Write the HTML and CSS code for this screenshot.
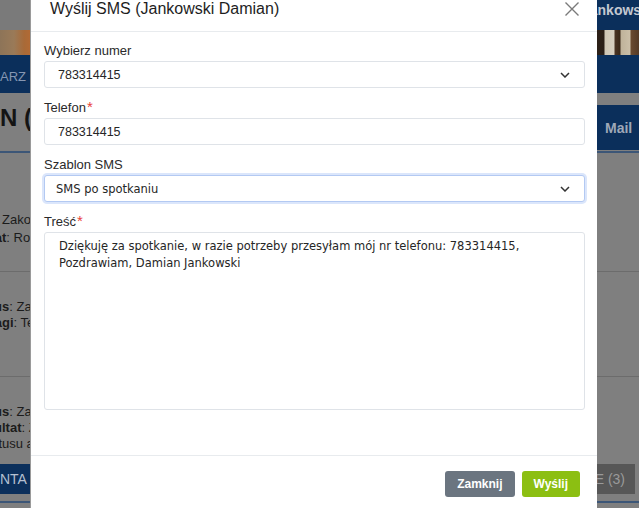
FILE: index.html
```html
<!DOCTYPE html>
<html lang="pl">
<head>
<meta charset="utf-8">
<title>Wyślij SMS</title>
<link rel="stylesheet" href="styles.css">
</head>
<body>
<div class="page">
  <header class="topbar">
    <div class="user">Jankowski Damian</div>
  </header>
  <div class="banner"></div>
  <nav class="nav"><span class="navitem"><span class="lead">KALEND</span>ARZ</span></nav>
  <div class="titlerow">
    <h1 class="ptitle"><span class="lead">KLIENT: JANKOWSKI DAMIA</span>N (</h1>
    <div class="actions"><span class="abtn">Mail</span></div>
  </div>
  <div class="entries">
    <div class="entry e1">
      <div class="ln"><span class="lead"><b>Status</b>:&nbsp;</span>Zakończone</div>
      <div class="ln"><span class="lead"><b>Rezulta</b></span><b>t</b>: Rozmowa</div>
    </div>
    <div class="entry e2">
      <div class="ln"><span class="lead"><b>Statu</b></span><b>s</b>: Zakończone</div>
      <div class="ln"><span class="lead"><b>Uwa</b></span><b>gi</b>: Telefon</div>
    </div>
    <div class="entry e3">
      <div class="ln"><span class="lead"><b>Statu</b></span><b>s</b>: Zakończone</div>
      <div class="ln"><span class="lead"><b>Rezu</b></span><b>ltat</b>: Zaplanowano</div>
      <div class="ln"><span class="lead">Zmiana stat</span>usu albo</div>
    </div>
  </div>
  <div class="bottombar">
    <span class="bbtn navy"><span class="lead">DODAJ KLIE</span>NTA</span>
    <span class="bbtn dark">ZADANIE (3)</span>
  </div>
</div>

<div class="modal" role="dialog" aria-labelledby="mtitle">
  <div class="mhead">
    <h2 class="mtitle" id="mtitle">Wyślij SMS (Jankowski Damian)</h2>
    <button class="close" type="button" aria-label="Zamknij">
      <svg width="16" height="16" viewBox="0 0 16 16"><path d="M1.5 1.5 L14.5 14.5 M14.5 1.5 L1.5 14.5" stroke="#7a7a7a" stroke-width="1.4" fill="none"/></svg>
    </button>
  </div>
  <div class="mbody">
    <div class="group">
      <label class="lbl">Wybierz numer</label>
      <div class="selwrap">
        <select class="ctrl sel"><option>783314415</option></select>
        <svg class="chev" width="10" height="6" viewBox="0 0 10 6"><path d="M1 1 L5 5 L9 1" stroke="#333" stroke-width="1.5" fill="none"/></svg>
      </div>
    </div>
    <div class="group">
      <label class="lbl">Telefon<span class="req">*</span></label>
      <input class="ctrl inp" type="text" value="783314415">
    </div>
    <div class="group">
      <label class="lbl">Szablon SMS</label>
      <div class="selwrap">
        <select class="ctrl sel focus tpl"><option>SMS po spotkaniu</option></select>
        <svg class="chev" width="10" height="6" viewBox="0 0 10 6"><path d="M1 1 L5 5 L9 1" stroke="#333" stroke-width="1.5" fill="none"/></svg>
      </div>
    </div>
    <div class="group last">
      <label class="lbl">Treść<span class="req">*</span></label>
      <textarea class="ctrl ta">Dziękuję za spotkanie, w razie potrzeby przesyłam mój nr telefonu: 783314415, Pozdrawiam, Damian Jankowski</textarea>
    </div>
  </div>
  <div class="mfoot">
    <button class="btn gray" type="button">Zamknij</button>
    <button class="btn green" type="button">Wyślij</button>
  </div>
</div>
</body>
</html>
```

FILE: styles.css
```css
html, body {
  margin: 0;
  padding: 0;
  width: 639px;
  height: 508px;
  overflow: hidden;
  background: #7f7f7f;
  font-family: "Liberation Sans", Arial, sans-serif;
}

.page {
  position: relative;
  width: 639px;
  height: 508px;
  background: #7f7f7f;
  color: #1b1b1b;
  font-size: 13px;
}

.lead {
  display: inline-flex;
  justify-content: flex-end;
  width: 0;
  white-space: nowrap;
}

/* top bar */
.topbar {
  height: 30px;
  display: flex;
  justify-content: flex-end;
  background: #7a7a7a;
}
.user {
  width: 136px;
  padding-left: 79px;
  box-sizing: border-box;
  background: #0b2f5b;
  color: #c3c8d1;
  font-weight: bold;
  font-size: 14px;
  line-height: 21px;
  white-space: nowrap;
  overflow: hidden;
}

.banner {
  height: 25px;
  background: linear-gradient(90deg,
    #8d7458 0, #9a7a58 14px, #a86a38 24px, #b26a34 30px, #6a5038 60px,
    #3e2c1e 560px, #2c2018 598px, #2a1e16 604px,
    #cfc6b4 605px, #d8d0c0 614px, #4a3424 615px, #3a2818 620px,
    #bfb29a 621px, #cbbfa8 630px, #6a4a30 631px, #553a26 639px);
}

.nav {
  height: 38px;
  background: #0b2f5b;
  display: flex;
  align-items: center;
}
.navitem {
  color: #8697b2;
  font-size: 13px;
  white-space: nowrap;
  padding-top: 4px;
}

.titlerow {
  height: 58px;
  border-bottom: 2px solid #3c5677;
  display: flex;
  justify-content: space-between;
  align-items: flex-start;
}
.ptitle {
  margin: 0;
  padding-top: 10px;
  font-size: 24px;
  line-height: 30px;
  font-weight: bold;
  color: #141414;
  white-space: nowrap;
}
.actions {
  margin-top: 12px;
  display: flex;
}
.abtn {
  display: flex;
  align-items: center;
  height: 45px;
  width: 60px;
  padding-left: 8px;
  box-sizing: border-box;
  background: #0b2f5b;
  color: #9ea8b8;
  font-weight: bold;
  font-size: 14px;
  margin-right: -18px;
}

.entries {
  display: flex;
  flex-direction: column;
}
.entry {
  border-bottom: 1px solid #6c6c6c;
  padding-left: 2px;
}
.ln {
  white-space: nowrap;
}
.e1 { padding-top: 58px; padding-bottom: 24px; }
.e1 .ln { line-height: 18px; }
.e2 { padding-top: 27px; padding-bottom: 45px; }
.e2 .ln { line-height: 16px; }
.e3 { padding-top: 27px; padding-bottom: 12px; border-bottom: none; }
.e3 .ln { line-height: 16px; }

.bottombar {
  display: flex;
  justify-content: space-between;
  padding-bottom: 7px;
  border-bottom: 2px solid #3c5677;
}
.bbtn {
  display: flex;
  align-items: center;
  height: 30px;
  font-size: 14px;
  white-space: nowrap;
  box-sizing: border-box;
}
.bbtn.navy {
  background: #0b2f5b;
  color: #b5c0d0;
  width: 60px;
}
.bbtn.dark {
  background: #575757;
  color: #9a9a9a;
  padding: 0 10px 0 18px;
  margin-right: 4px;
}

/* modal */
.modal {
  position: absolute;
  top: -16px;
  left: 30px;
  width: 567px;
  background: #fff;
  border-left: 1px solid #9a9a9a;
  box-sizing: border-box;
  color: #222;
}
.mhead {
  display: flex;
  justify-content: space-between;
  align-items: flex-start;
  padding: 15px 17px 12px 19px;
  border-bottom: 1px solid #e8ebee;
}
.mtitle {
  margin: 0;
  font-size: 16px;
  line-height: 20px;
  font-weight: normal;
  color: #1e1e1e;
}
.close {
  border: 0;
  background: none;
  padding: 0;
  margin-top: 2px;
  width: 16px;
  height: 16px;
  display: block;
}
.close svg { display: block; }

.mbody {
  padding: 11px 12px 45px 13px;
}
.group {
  margin-bottom: 12px;
}
.group.last { margin-bottom: 0; }
.lbl {
  display: block;
  font-size: 13px;
  line-height: 16px;
  margin-bottom: 2px;
  color: #2a2a2a;
}
.req {
  color: #e8413a;
  font-size: 15px;
  line-height: 10px;
  margin-left: 1px;
}
.ctrl {
  display: block;
  width: 100%;
  box-sizing: border-box;
  margin: 0;
  border: 1px solid #dfe3e8;
  border-radius: 3px;
  background: #fff;
  color: #262626;
  font-family: "Liberation Sans", Arial, sans-serif;
  font-size: 12.5px;
  outline: none;
}
.sel, .inp {
  height: 27px;
  padding: 0 30px 0 13px;
  -webkit-appearance: none;
  appearance: none;
}
.sel.focus {
  border-color: #b3c9f2;
  box-shadow: 0 0 0 2px #dbe6fb;
}
.tpl {
  font-family: "DejaVu Sans", Verdana, sans-serif;
  font-size: 11.5px;
  padding-left: 11px;
}
.selwrap {
  position: relative;
}
.chev {
  position: absolute;
  right: 15px;
  top: 11px;
  pointer-events: none;
}
.ta {
  height: 178px;
  resize: none;
  padding: 5px 14px;
  font-family: "DejaVu Sans", Verdana, sans-serif;
  font-size: 11.5px;
  line-height: 17px;
}

.mfoot {
  display: flex;
  justify-content: flex-end;
  gap: 7px;
  padding: 15px 17px 15px 15px;
  border-top: 1px solid #e8ebee;
}
.btn {
  height: 26px;
  border: 0;
  border-radius: 3px;
  padding: 0 12px;
  font-family: "Liberation Sans", Arial, sans-serif;
  font-size: 12px;
  font-weight: bold;
  color: #fff;
}
.btn.gray { background: #6b7580; }
.btn.green { background: #8cbf12; }
```
